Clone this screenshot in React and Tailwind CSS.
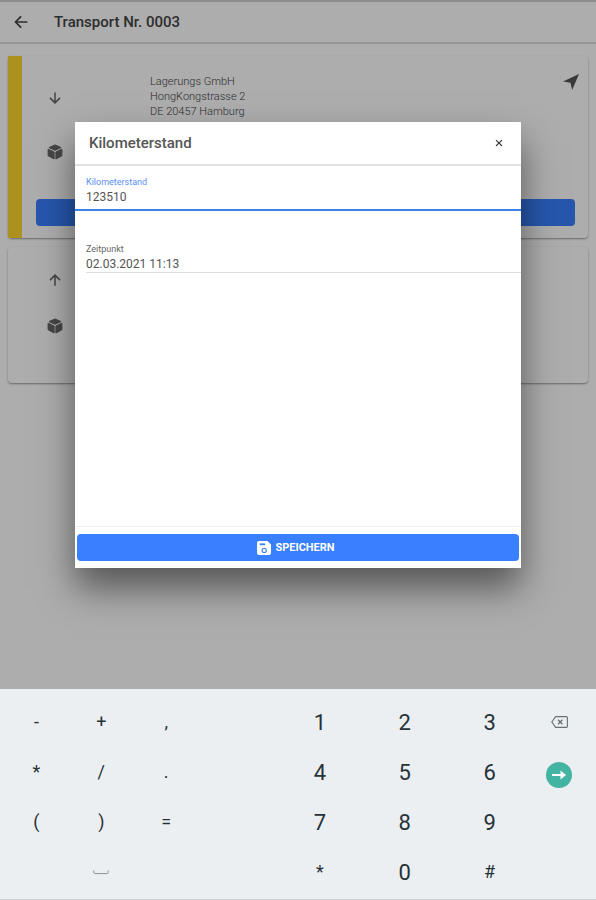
import { useState } from 'react'
import { IoArrowBackSharp, IoArrowDownSharp, IoArrowUpSharp, IoCloseSharp } from 'react-icons/io5'

const keyRows = [
  ['-', '+', ',', '1', '2', '3', 'backspace'],
  ['*', '/', '.', '4', '5', '6', 'enter'],
  ['(', ')', '=', '7', '8', '9', null],
  [null, 'space', null, '*', '0', '#', null]
]

const CubeIcon = ({ className }) => (
  <svg className={className} viewBox="0 0 16 16" fill="currentColor" stroke="currentColor" strokeLinejoin="round" aria-hidden="true">
    <path d="M8 .9l6 2.7L8 6.3 2 3.6z" />
    <path d="M1.1 5.2l6 2.8v7L1.1 11.8z" />
    <path d="M14.9 5.2l-6 2.8v7l6-3.2z" />
  </svg>
)

const NavigateIcon = () => (
  <svg className="size-4" viewBox="0 0 16 16" fill="currentColor" aria-hidden="true">
    <path d="M16 0L0 7.6l7.4 1.1L9.2 16z" />
  </svg>
)

const SaveIcon = () => (
  <svg className="size-3.5" viewBox="0 0 14 14" aria-hidden="true">
    <path d="M2 0h8.4L14 3.4V12a2 2 0 0 1-2 2H2a2 2 0 0 1-2-2V2a2 2 0 0 1 2-2z" fill="white" />
    <path d="M2.8 2.4h5.4v1.8H2.8z" fill="#3880ff" />
    <circle cx="7.2" cy="9.4" r="2.1" fill="none" stroke="#3880ff" strokeWidth="1.1" />
  </svg>
)

const BackspaceIcon = () => (
  <svg className="h-3 w-[17px]" viewBox="0 0 17 12" fill="none" stroke="currentColor" aria-hidden="true">
    <path d="M4.6.6h10.6a1.2 1.2 0 0 1 1.2 1.2v8.4a1.2 1.2 0 0 1-1.2 1.2H4.6L.8 6z" strokeWidth="1.1" strokeLinejoin="round" />
    <path d="M7 3.8l4.4 4.4M11.4 3.8L7 8.2" strokeWidth="1.3" />
  </svg>
)

const EnterIcon = () => (
  <svg className="size-4" viewBox="0 0 16 16" fill="none" aria-hidden="true">
    <path d="M1 8h10" stroke="white" strokeWidth="2" />
    <path d="M9.5 3.6L15 8l-5.5 4.4z" fill="white" />
  </svg>
)

const SpaceIcon = () => (
  <svg className="h-[5px] w-4" viewBox="0 0 16 5" fill="none" stroke="currentColor" aria-hidden="true">
    <path d="M.8.5v1.7q0 1.4 1.4 1.4h11.6q1.4 0 1.4-1.4V.5" />
  </svg>
)

const StopRow = ({ icon: Icon, className, children }) => (
  <div className={`flex items-center pl-3.5 ${className}`}>
    <div className="flex w-[38px] shrink-0 justify-center">
      <Icon className="size-4 text-[#666]" />
    </div>
    {children}
  </div>
)

const TransportPage = () => (
  <>
    <header className="flex h-11 items-center border-t-2 border-b-2 border-t-[#d0d0d0] border-b-[#dcdcdc] px-3">
      <button type="button" aria-label="Zurück" className="flex size-[18px] items-center justify-center text-[#444]">
        <IoArrowBackSharp className="size-[18px]" />
      </button>
      <h1 className="ml-6 text-[15px] font-medium text-[#444]">Transport Nr. 0003</h1>
    </header>

    <main className="flex flex-col gap-[9px] px-2 pt-3">
      <section className="flex rounded-sm bg-white shadow-[0_1px_2px_rgba(0,0,0,0.4)]">
        <div className="w-3.5 shrink-0 bg-[#ffd62e]"></div>
        <div className="flex-1 pt-[18px] pb-3">
          <StopRow icon={IoArrowDownSharp} className="h-12">
            <address className="ml-[76px] flex-1 self-start text-[11px] leading-[15px] font-light text-[#444] not-italic">
              Lagerungs GmbH<br />
              HongKongstrasse 2<br />
              DE 20457 Hamburg
            </address>
            <button type="button" aria-label="Navigation" className="mr-[9px] self-start text-[#555]">
              <NavigateIcon />
            </button>
          </StopRow>
          <StopRow icon={CubeIcon} className="h-[60px]" />
          <div className="mt-[17px] pr-[13px] pl-3.5">
            <button type="button" aria-label="Bestätigen" className="block h-[27px] w-full rounded-sm bg-[#3880ff]"></button>
          </div>
        </div>
      </section>

      <section className="rounded-sm bg-white pt-[9px] pb-[35px] pl-3.5 shadow-[0_1px_2px_rgba(0,0,0,0.4)]">
        <StopRow icon={IoArrowUpSharp} className="h-12" />
        <StopRow icon={CubeIcon} className="h-11" />
      </section>
    </main>
  </>
)

const MileageDialog = () => {
  const [mileage, setMileage] = useState('123510')
  const [time, setTime] = useState('02.03.2021 11:13')

  return (
    <div
      role="dialog"
      aria-labelledby="dialog-title"
      className="flex w-full flex-col bg-white shadow-[0_20px_34px_rgba(0,0,0,0.5)]"
    >
      <div className="flex h-11 items-center justify-between border-b-2 border-[#e2e2e2] pr-4 pl-3.5">
        <h2 id="dialog-title" className="text-[15px] font-medium text-[#555]">Kilometerstand</h2>
        <button type="button" aria-label="Schließen" className="text-[#333]">
          <IoCloseSharp className="size-3" />
        </button>
      </div>

      <form className="flex flex-1 flex-col">
        <div className="border-b-2 border-[#3f7fe8] pt-2.5 pb-1 pl-[11px]">
          <label htmlFor="mileage" className="block text-[9px] leading-3 text-[#5c8ff5]">Kilometerstand</label>
          <input
            id="mileage"
            inputMode="numeric"
            value={mileage}
            onChange={(e) => setMileage(e.target.value)}
            className="block w-full pt-px text-xs leading-4 text-[#555] outline-none"
          />
        </div>
        <div className="mt-8 ml-[11px] border-b border-[#dedede]">
          <label htmlFor="time" className="block text-[9px] leading-3 text-[#666]">Zeitpunkt</label>
          <input
            id="time"
            value={time}
            onChange={(e) => setTime(e.target.value)}
            className="block w-full pt-px text-xs leading-4 text-[#555] outline-none"
          />
        </div>

        <div className="mt-auto border-t border-[#eee] px-0.5 py-[7px]">
          <button
            type="button"
            className="flex h-[27px] w-full items-center justify-center gap-1 rounded-sm bg-[#3880ff] pt-0.5 pr-1 pb-px text-[11px] font-bold text-white uppercase"
          >
            <SaveIcon />
            Speichern
          </button>
        </div>
      </form>
    </div>
  )
}

const Key = ({ value }) => {
  if (value === null) return <span></span>

  if (value === 'backspace') {
    return (
      <button type="button" aria-label="Löschen" className="flex items-center justify-center text-[#667075]">
        <BackspaceIcon />
      </button>
    )
  }

  if (value === 'enter') {
    return (
      <button type="button" aria-label="Weiter" className="flex items-center justify-center pt-1.5">
        <span className="flex size-[26px] items-center justify-center rounded-full bg-[#43b3a2]">
          <EnterIcon />
        </span>
      </button>
    )
  }

  if (value === 'space') {
    return (
      <button type="button" aria-label="Leerzeichen" className="flex items-center justify-center text-[#8a9195]">
        <SpaceIcon />
      </button>
    )
  }

  const isDigit = /\d/.test(value)
  return (
    <button type="button" className={`text-[#263238] ${isDigit ? 'text-[22px]' : 'text-lg'}`}>
      {value}
    </button>
  )
}

const Keyboard = () => (
  <div className="border-b border-[#cfd2d4] bg-[#eceff1] pt-2 pr-2.5 pb-0.5 pl-1">
    {keyRows.map((row, i) => (
      <div key={i} className="grid h-[50px] grid-cols-[65fr_65fr_65fr_79fr_85fr_85fr_85fr_54fr]">
        {row.slice(0, 3).map((value, j) => <Key key={j} value={value} />)}
        <span></span>
        {row.slice(3).map((value, j) => <Key key={j} value={value} />)}
      </div>
    ))}
  </div>
)

const App = () => (
  <div className="flex min-h-screen flex-col bg-white font-[Roboto,sans-serif]">
    <div className="relative flex-1 overflow-hidden">
      <TransportPage />
      <div className="absolute inset-0 flex bg-black/32 px-[75px] pt-[122px] pb-[121px]">
        <MileageDialog />
      </div>
    </div>
    <Keyboard />
  </div>
)

export default App
